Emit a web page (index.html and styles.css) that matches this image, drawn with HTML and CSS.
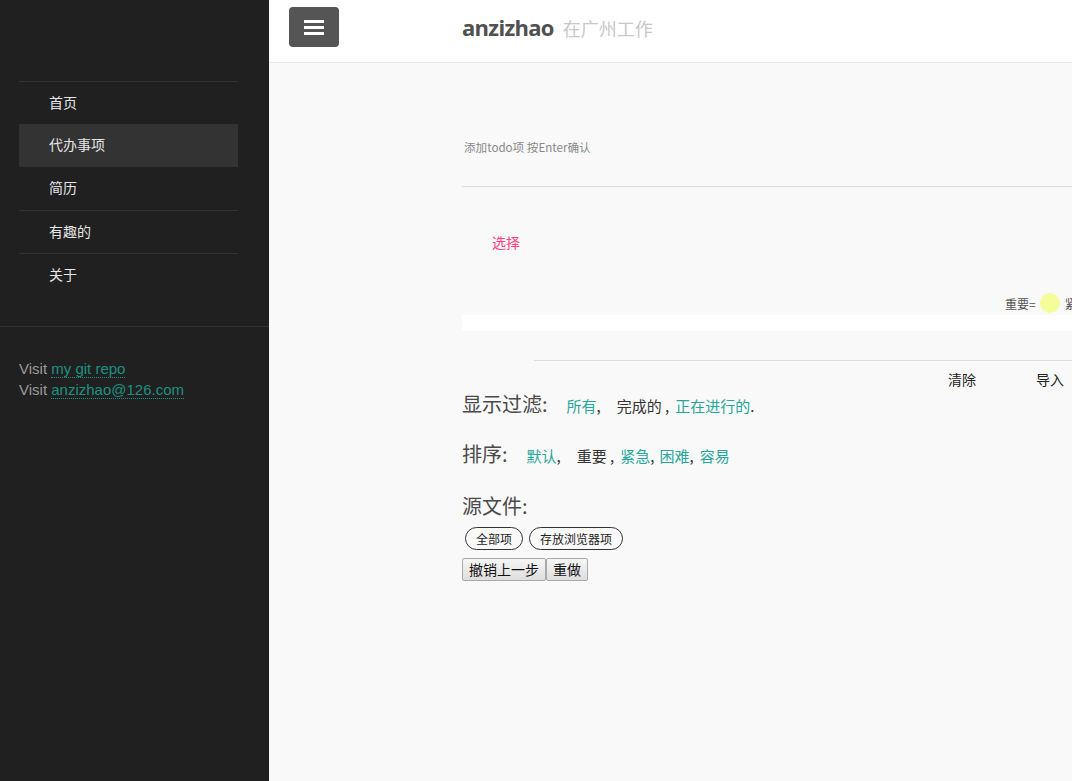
FILE: index.html
```html
<!DOCTYPE html>
<html lang="zh">
<head>
<meta charset="utf-8">
<title>anzizhao - todo</title>
<link rel="stylesheet" href="styles.css">
</head>
<body>
<div class="layout">
  <aside class="sidebar">
    <nav class="menu">
      <a class="menu-item first-item" href="#">首页</a>
      <a class="menu-item selected" href="#">代办事项</a>
      <a class="menu-item" href="#">简历</a>
      <a class="menu-item bordered" href="#">有趣的</a>
      <a class="menu-item bordered" href="#">关于</a>
    </nav>
    <div class="side-footer">
      <div>Visit <a class="side-link" href="#">my git repo </a></div>
      <div>Visit <a class="side-link" href="#">anzizhao@126.com</a></div>
    </div>
  </aside>
  <main class="main">
    <header class="header">
      <button class="menu-toggle" aria-label="menu">
        <span class="bar"></span><span class="bar"></span><span class="bar"></span>
      </button>
      <h1 class="title">anzizhao <small class="subtitle">在广州工作</small></h1>
    </header>
    <section class="content">
      <input class="todo-input" type="text" placeholder="添加todo项 按Enter确认">
      <div class="select-row"><span class="select">选择</span></div>
      <div class="legend">
        <span class="legend-label">重要=</span><span class="dot yellow"></span>
        <span class="legend-label">紧急=</span><span class="dot orange"></span>
        <span class="legend-label">困难=</span><span class="dot red"></span>
      </div>
      <div class="white-bar"></div>
      <div class="divider"></div>
      <div class="actions">
        <span class="action">清除</span>
        <span class="action">导入</span>
      </div>
      <div class="filter-row">
        <span class="row-title">显示过滤:</span>
        <a class="link first" href="#">所有</a><span class="txt">,</span>
        <span class="txt gap16">完成的 ,</span>
        <a class="link gap6" href="#">正在进行的</a><span class="txt">.</span>
      </div>
      <div class="sort-row">
        <span class="row-title">排序:</span>
        <a class="link first" href="#">默认</a><span class="txt">,</span>
        <span class="txt gap16">重要 ,</span>
        <a class="link gap6" href="#">紧急</a><span class="txt">,</span>
        <a class="link gap5" href="#">困难</a><span class="txt">,</span>
        <a class="link gap6" href="#">容易</a>
      </div>
      <div class="source-row"><span class="row-title">源文件:</span></div>
      <div class="pills">
        <button class="pill">全部项</button>
        <button class="pill">存放浏览器项</button>
      </div>
      <div class="history">
        <button class="btn">撤销上一步</button><button class="btn">重做</button>
      </div>
    </section>
  </main>
</div>
</body>
</html>
```

FILE: styles.css
```css
* { box-sizing: border-box; }
html, body { margin: 0; padding: 0; height: 100%; }
body {
  font-family: "Noto Sans CJK SC", "Noto Sans", sans-serif;
  background: #f9f9f9;
  color: #333;
}
.layout { display: flex; height: 100vh; overflow: hidden; }

/* sidebar */
.sidebar {
  width: 269px;
  flex: none;
  background: #202020;
  display: flex;
  flex-direction: column;
}
.menu {
  margin: 81px 31px 0 19px;
  border-top: 1px solid #333;
  display: flex;
  flex-direction: column;
}
.menu-item {
  display: block;
  height: 43px;
  line-height: 41px;
  padding-left: 30px;
  font-size: 14px;
  color: #e6e6e6;
  text-decoration: none;
}
.menu-item.first-item { height: 42px; line-height: 40px; }
.menu-item.selected { background: #333; }
.menu-item.bordered { border-top: 1px solid #333; line-height: 40px; }
.side-footer {
  margin-top: 30px;
  border-top: 1px solid #333;
  padding: 31px 19px 0;
  font-family: "Liberation Sans", "Noto Sans", sans-serif;
  font-size: 15px;
  line-height: 21px;
  color: #9a9a9a;
}
.side-link {
  color: #1e9080;
  text-decoration: none;
  border-bottom: 1px dotted #1e9080;
}

/* main */
.main {
  flex: 1;
  min-width: 0;
  overflow: hidden;
  background: #f9f9f9;
}
.header {
  height: 63px;
  background: #fff;
  border-bottom: 1px solid #e8e8e8;
  display: flex;
  align-items: center;
  padding: 7px 0 15px 20px;
}
.menu-toggle {
  width: 50px;
  height: 40px;
  background: #555;
  border: none;
  border-radius: 4px;
  display: flex;
  flex-direction: column;
  align-items: center;
  justify-content: center;
  gap: 3px;
  padding: 0;
}
.bar { display: block; width: 20px; height: 3px; background: #fff; }
.title {
  margin: 0 0 0 123px;
  font-family: "Open Sans", sans-serif;
  font-weight: 700;
  font-size: 22px;
  letter-spacing: -0.7px;
  color: #505050;
  white-space: nowrap;
}
.subtitle {
  font-family: "Noto Sans CJK SC", sans-serif;
  font-weight: 400;
  font-size: 18px;
  letter-spacing: 0;
  color: #c8c8c8;
  margin-left: 4px;
}

/* content */
.content {
  padding-left: 193px;
  width: 1200px;
}
.todo-input {
  display: block;
  width: 100%;
  margin-top: 45px;
  height: 79px;
  border: none;
  border-bottom: 1px solid #dcdcdc;
  background: transparent;
  padding: 0 0 0 2px;
  font-family: "Noto Sans CJK SC", sans-serif;
  font-size: 11.6px;
  outline: none;
}
.todo-input::placeholder { color: #888; }
.select-row { margin-top: 44px; padding-left: 30px; height: 20px; line-height: 20px; }
.select { color: #ff4081; font-size: 14px; }
.legend {
  margin-top: 42px;
  margin-left: 543px;
  display: flex;
  align-items: center;
  height: 20px;
  font-size: 12px;
  color: #555;
}
.legend-label { margin-right: 4px; }
.dot { width: 20px; height: 20px; border-radius: 50%; margin-right: 5px; }
.dot.yellow { background: #f5fd98; }
.dot.orange { background: #ffcc80; }
.dot.red { background: #ff8a80; }
.white-bar { margin-top: 2px; height: 16px; background: #fff; }
.divider { margin-top: 29px; margin-left: 72px; border-top: 1px solid #dcdcdc; }
.actions {
  margin-top: 8px;
  margin-left: 486px;
  display: flex;
  gap: 60px;
  font-size: 14px;
  line-height: 20px;
  color: #222;
}
.filter-row, .sort-row, .source-row {
  display: flex;
  align-items: baseline;
  line-height: 28px;
  font-size: 15px;
  color: #333;
  white-space: pre;
}
.filter-row { margin-top: 1px; }
.sort-row { margin-top: 20px; }
.source-row { margin-top: 22px; }
.row-title { font-size: 20px; color: #4a4a4a; }
.link { color: #26a69a; text-decoration: none; }
.link.first { margin-left: 19px; }
.gap16 { margin-left: 16px; }
.gap6 { margin-left: 6px; }
.gap5 { margin-left: 5px; }
.pills { margin-top: 7px; display: flex; gap: 6px; padding-left: 3px; }
.pill {
  height: 23px;
  padding: 0 10px;
  border: 1px solid #333;
  border-radius: 12px;
  background: transparent;
  font-family: "Noto Sans CJK SC", sans-serif;
  font-size: 12px;
  color: #222;
  line-height: 21px;
}
.history { margin-top: 8px; display: flex; }
.btn {
  height: 23px;
  padding: 0 6px;
  border: 1px solid #a9a9a9;
  border-radius: 2px;
  background: linear-gradient(#f6f6f6, #dedede);
  font-family: "Noto Sans CJK SC", sans-serif;
  font-size: 14px;
  line-height: 21px;
  color: #111;
}
```
